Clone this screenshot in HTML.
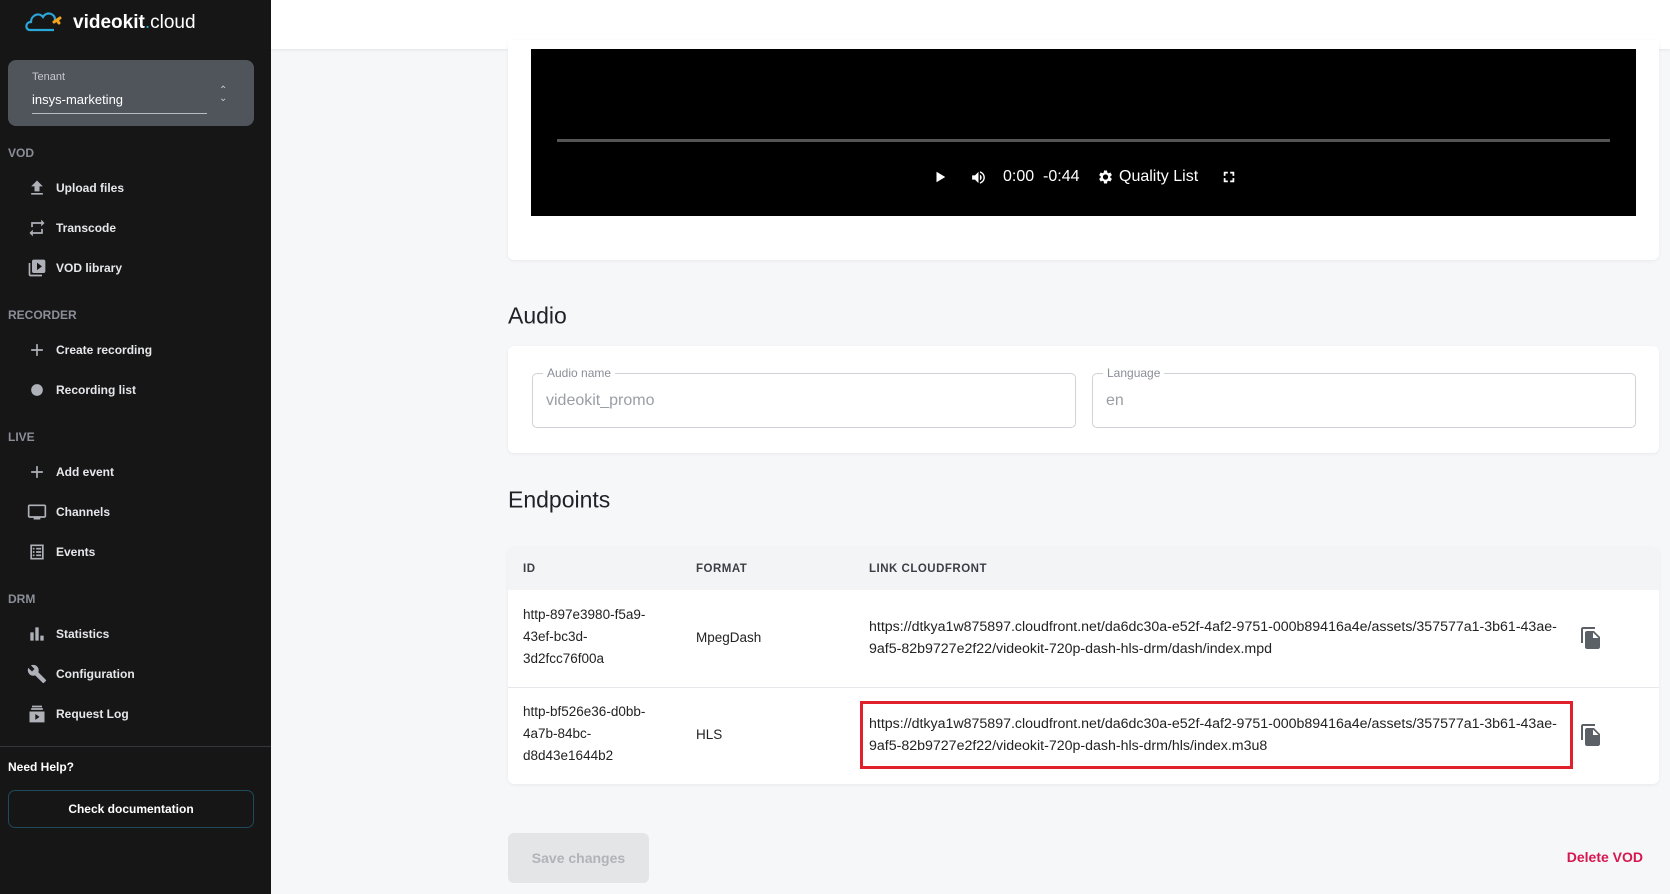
<!DOCTYPE html>
<html><head><meta charset="utf-8"><style>
*{box-sizing:border-box;margin:0;padding:0}
body{width:1670px;height:894px;overflow:hidden;background:#f6f7f9;font-family:"Liberation Sans",sans-serif;position:relative}
.sb{position:absolute;left:0;top:0;width:271px;height:894px;background:#161617;color:#e6e7ea}
.abs{position:absolute}
.sec{position:absolute;left:8px;font-size:12px;font-weight:bold;color:#8a8e96}
.it{position:absolute;left:56px;font-size:12px;font-weight:bold;color:#e6e7ea;transform:translateY(-50%)}
.ic{position:absolute;left:27px;width:20px;height:20px;transform:translateY(-50%)}
.card{position:absolute;background:#fff;border-radius:6px;box-shadow:0 1px 3px rgba(0,0,0,.06)}
.h{position:absolute;left:508px;font-size:23px;color:#1e2126;transform:translateY(-50%)}
.inp{position:absolute;border:1px solid #cfd2d6;border-radius:5px;height:55px}
.inp .l{position:absolute;left:10px;top:-8px;background:#fff;padding:0 4px;font-size:12px;color:#8a8e96}
.inp .v{position:absolute;left:13px;top:18px;font-size:16px;color:#9a9ea5}
.th{position:absolute;top:569px;font-size:11.5px;font-weight:bold;color:#3b3f45;letter-spacing:.5px;transform:translateY(-50%)}
.td{position:absolute;font-size:13.5px;line-height:22px;color:#222}
.lk{font-size:14.2px}
</style></head><body>
<div class="sb">
 <svg class="abs" style="left:24px;top:8px" width="40" height="26" viewBox="0 0 40 26"><path d="M6 22 H30 M6 22 C1 22 1 14 7 14 C7 7 15 4 19 9 C22 3 32 5 31 13" fill="none" stroke="#2aa7d8" stroke-width="2.2"/><path d="M30 14 l6 -4 M33 12 l2 3" stroke="#f2a21b" stroke-width="3" stroke-linecap="round"/></svg>
 <div class="abs" style="left:73px;top:12px;font-size:19px;color:#fff"><b>videokit</b><span style="color:#2aa7d8">.</span>cloud</div>
 <div class="abs" style="left:8px;top:60px;width:246px;height:66px;background:#50555c;border-radius:8px">
  <div class="abs" style="left:24px;top:11px;font-size:11px;color:#c5c8cc">Tenant</div>
  <div class="abs" style="left:24px;top:32px;font-size:13px;color:#fff">insys-marketing</div>
  <div class="abs" style="left:24px;top:53px;width:175px;height:1px;background:#b8bbc0"></div>
  <div class="abs" style="left:211px;top:27px;font-size:10px;color:#c5c8cc;line-height:8px">&#8963;<br>&#8964;</div>
 </div>
 <div class="sec" style="top:146px">VOD</div>
 <svg class="ic" style="top:188px" viewBox="0 0 24 24"><path d="M5 20h14v-2H5zm0-10h4v6h6v-6h4l-7-7z" fill="#aeb2b8"/></svg><div class="it" style="top:188px">Upload files</div>
 <svg class="ic" style="top:228px" viewBox="0 0 24 24"><path d="M7 7h10v3l4-4-4-4v3H5v6h2zm10 10H7v-3l-4 4 4 4v-3h12v-6h-2z" fill="#aeb2b8"/></svg><div class="it" style="top:228px">Transcode</div>
 <svg class="ic" style="top:268px" viewBox="0 0 24 24"><path d="M4 6H2v14c0 1.1.9 2 2 2h14v-2H4zm16-4H8c-1.1 0-2 .9-2 2v12c0 1.1.9 2 2 2h12c1.1 0 2-.9 2-2V4c0-1.1-.9-2-2-2zm-8 12.5v-9l6 4.5z" fill="#aeb2b8"/></svg><div class="it" style="top:268px">VOD library</div>
 <div class="sec" style="top:308px">RECORDER</div>
 <svg class="ic" style="top:350px" viewBox="0 0 24 24"><path d="M19 13h-6v6h-2v-6H5v-2h6V5h2v6h6z" fill="#aeb2b8"/></svg><div class="it" style="top:350px">Create recording</div>
 <svg class="ic" style="top:390px" viewBox="0 0 24 24"><circle cx="12" cy="12" r="7" fill="#aeb2b8"/></svg><div class="it" style="top:390px">Recording list</div>
 <div class="sec" style="top:430px">LIVE</div>
 <svg class="ic" style="top:472px" viewBox="0 0 24 24"><path d="M19 13h-6v6h-2v-6H5v-2h6V5h2v6h6z" fill="#aeb2b8"/></svg><div class="it" style="top:472px">Add event</div>
 <svg class="ic" style="top:512px" viewBox="0 0 24 24"><path d="M21 3H3c-1.1 0-2 .9-2 2v12c0 1.1.9 2 2 2h5v2h8v-2h5c1.1 0 2-.9 2-2V5c0-1.1-.9-2-2-2zm0 14H3V5h18z" fill="#aeb2b8"/></svg><div class="it" style="top:512px">Channels</div>
 <svg class="ic" style="top:552px" viewBox="0 0 24 24"><path d="M4 3h16v18H4zm2 2v14h12V5zm1 2h2v2H7zm4 0h6v2h-6zm-4 4h2v2H7zm4 0h6v2h-6zm-4 4h2v2H7zm4 0h6v2h-6z" fill="#aeb2b8"/></svg><div class="it" style="top:552px">Events</div>
 <div class="sec" style="top:592px">DRM</div>
 <svg class="ic" style="top:634px" viewBox="0 0 24 24"><path d="M4 10h4v10H4zm6-6h4v16h-4zm6 10h4v6h-4z" fill="#aeb2b8"/></svg><div class="it" style="top:634px">Statistics</div>
 <svg class="ic" style="top:674px" viewBox="0 0 24 24"><path d="M22.7 19l-9.1-9.1c.9-2.3.4-5-1.5-6.9-2-2-5-2.4-7.4-1.3L9 6 6 9 1.6 4.7C.4 7.1.9 10.1 2.9 12.1c1.9 1.9 4.6 2.4 6.9 1.5l9.1 9.1c.4.4 1 .4 1.4 0l2.3-2.3c.5-.4.5-1.1.1-1.4z" fill="#aeb2b8"/></svg><div class="it" style="top:674px">Configuration</div>
 <svg class="ic" style="top:714px" viewBox="0 0 24 24"><path d="M6 2h12v2H6zM5 5h14v2H5zM3 9h18v13H3zm7 3v7l5-3.5z" fill="#aeb2b8"/></svg><div class="it" style="top:714px">Request Log</div>
 <div class="abs" style="left:0;top:746px;width:271px;height:1px;background:#33363b"></div>
 <div class="abs" style="left:8px;top:760px;font-size:12px;font-weight:bold;color:#fff">Need Help?</div>
 <div class="abs" style="left:8px;top:790px;width:246px;height:38px;border:1px solid #1f4a5c;border-radius:7px;text-align:center;line-height:36px;font-size:12px;font-weight:bold;color:#fff">Check documentation</div>
</div>
<div class="abs" style="left:271px;top:0;width:1399px;height:49px;background:#fff;box-shadow:0 1px 3px rgba(0,0,0,.08)"></div>
<div class="card" style="left:508px;top:40px;width:1151px;height:220px;border-radius:0 0 6px 6px"></div>
<div class="abs" style="left:531px;top:49px;width:1105px;height:167px;background:#000">
 <div class="abs" style="left:26px;top:90px;width:1053px;height:3px;background:#555"></div>
 <svg class="abs" style="left:402px;top:121px" width="14" height="14" viewBox="0 0 24 24"><path d="M6 3l15 9-15 9z" fill="#fff"/></svg>
 <svg class="abs" style="left:439px;top:120px" width="17" height="17" viewBox="0 0 24 24"><path d="M3 9v6h4l5 5V4L7 9zm13.5 3c0-1.8-1-3.3-2.5-4v8c1.5-.7 2.5-2.2 2.5-4zM14 3.2v2.1c2.9.9 5 3.5 5 6.7s-2.1 5.8-5 6.7v2.1c4-.9 7-4.5 7-8.8s-3-7.9-7-8.8z" fill="#fff"/></svg>
 <div class="abs" style="left:472px;top:119px;font-size:16px;color:#fff">0:00&nbsp; -0:44</div>
 <svg class="abs" style="left:565px;top:119px" width="18" height="18" viewBox="0 0 24 24"><path d="M19.1 12.9a7 7 0 000-1.8l2.1-1.6-2-3.5-2.5 1a7 7 0 00-1.6-.9L14.7 3.4h-4l-.4 2.7a7 7 0 00-1.6.9l-2.5-1-2 3.5 2.1 1.6a7 7 0 000 1.8l-2.1 1.6 2 3.5 2.5-1a7 7 0 001.6.9l.4 2.7h4l.4-2.7a7 7 0 001.6-.9l2.5 1 2-3.5zM12.7 15.5a3.5 3.5 0 110-7 3.5 3.5 0 010 7z" fill="#fff"/></svg>
 <div class="abs" style="left:588px;top:119px;font-size:16px;color:#fff">Quality List</div>
 <svg class="abs" style="left:691px;top:121px" width="14" height="14" viewBox="0 0 24 24"><path d="M3 3h7v3H6v4H3zm11 0h7v7h-3V6h-4zM3 14h3v4h4v3H3zm15 0h3v7h-7v-3h4z" fill="#fff"/></svg>
</div>
<div class="h" style="top:316px">Audio</div>
<div class="card" style="left:508px;top:346px;width:1151px;height:107px">
 <div class="inp" style="left:24px;top:27px;width:544px"><span class="l">Audio name</span><span class="v">videokit_promo</span></div>
 <div class="inp" style="left:584px;top:27px;width:544px"><span class="l">Language</span><span class="v">en</span></div>
</div>
<div class="h" style="top:500px">Endpoints</div>
<div class="card" style="left:508px;top:547px;width:1151px;height:237px;overflow:hidden">
 <div class="abs" style="left:0;top:0;width:1151px;height:43px;background:#f3f4f6"></div>
 <div class="abs" style="left:0;top:140px;width:1151px;height:1px;background:#e6e7ea"></div>
</div>
<div class="th" style="left:523px">ID</div><div class="th" style="left:696px">FORMAT</div><div class="th" style="left:869px">LINK CLOUDFRONT</div>
<div class="td" style="left:523px;top:604px">http-897e3980-f5a9-<br>43ef-bc3d-<br>3d2fcc76f00a</div>
<div class="td" style="left:696px;top:627px">MpegDash</div>
<div class="td lk" style="left:869px;top:616px">https://dtkya1w875897.cloudfront.net/da6dc30a-e52f-4af2-9751-000b89416a4e/assets/357577a1-3b61-43ae-<br>9af5-82b9727e2f22/videokit-720p-dash-hls-drm/dash/index.mpd</div>
<div class="td" style="left:523px;top:701px">http-bf526e36-d0bb-<br>4a7b-84bc-<br>d8d43e1644b2</div>
<div class="td" style="left:696px;top:724px">HLS</div>
<div class="td lk" style="left:869px;top:713px">https://dtkya1w875897.cloudfront.net/da6dc30a-e52f-4af2-9751-000b89416a4e/assets/357577a1-3b61-43ae-<br>9af5-82b9727e2f22/videokit-720p-dash-hls-drm/hls/index.m3u8</div>
<div class="abs" style="left:860px;top:701px;width:713px;height:68px;border:3px solid #e0202a"></div>
<svg class="abs" style="left:1579px;top:626px" width="24" height="24" viewBox="0 0 24 24"><path d="M16 1H4c-1.1 0-2 .9-2 2v14h2V3h12zm-1 4l6 6v10c0 1.1-.9 2-2 2H8c-1.1 0-2-.9-2-2V7c0-1.1.9-2 2-2zm-1 7h5.5L14 6.5z" fill="#5b5f66"/></svg>
<svg class="abs" style="left:1579px;top:723px" width="24" height="24" viewBox="0 0 24 24"><path d="M16 1H4c-1.1 0-2 .9-2 2v14h2V3h12zm-1 4l6 6v10c0 1.1-.9 2-2 2H8c-1.1 0-2-.9-2-2V7c0-1.1.9-2 2-2zm-1 7h5.5L14 6.5z" fill="#5b5f66"/></svg>
<div class="abs" style="left:508px;top:833px;width:141px;height:50px;background:#e4e5e7;border-radius:6px;text-align:center;line-height:50px;font-size:14px;font-weight:bold;color:#b0b3b8">Save changes</div>
<div class="abs" style="right:27px;top:849px;font-size:14px;font-weight:bold;color:#d5174f">Delete VOD</div>
</body></html>
